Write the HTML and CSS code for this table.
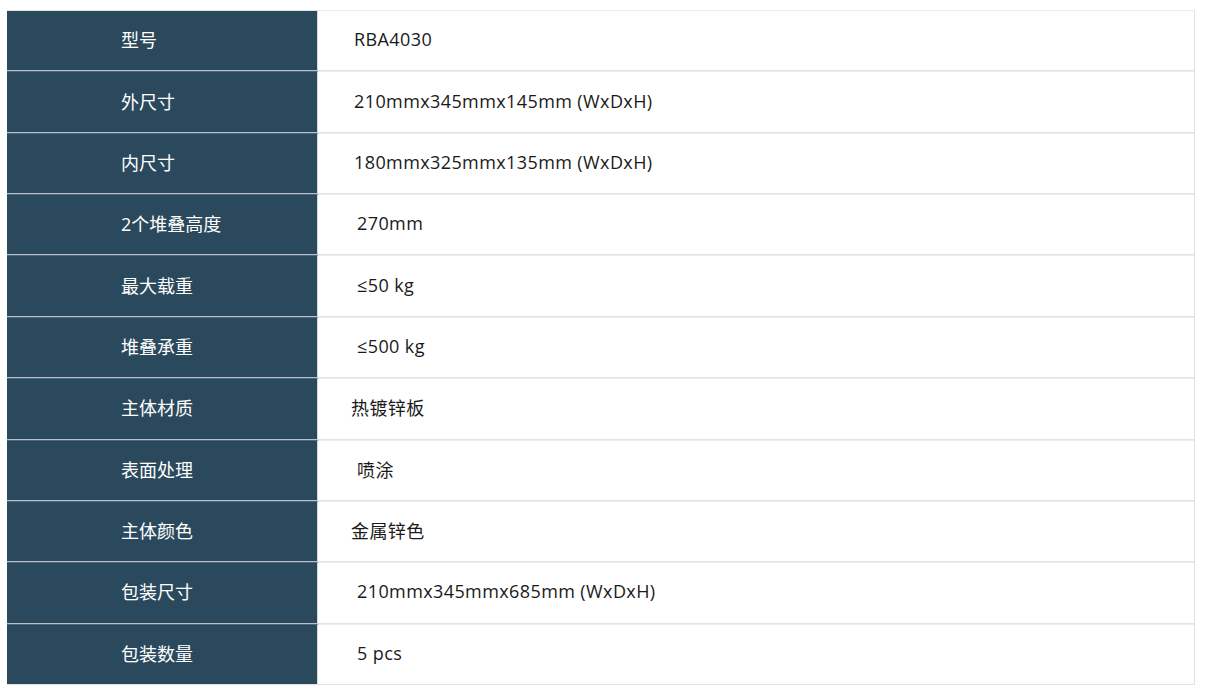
FILE: index.html
```html
<!DOCTYPE html>
<html lang="zh-CN">
<head>
<meta charset="utf-8">
<link rel="stylesheet" href="styles.css">
</head>
<body>
<div class="spec">
  <div class="row"><div class="k">型号</div><div class="v i3">RBA4030</div></div>
  <div class="row"><div class="k">外尺寸</div><div class="v i3">210mmx345mmx145mm (WxDxH)</div></div>
  <div class="row"><div class="k">内尺寸</div><div class="v i3">180mmx325mmx135mm (WxDxH)</div></div>
  <div class="row"><div class="k">2个堆叠高度</div><div class="v i6">270mm</div></div>
  <div class="row"><div class="k">最大载重</div><div class="v i6">≤50 kg</div></div>
  <div class="row"><div class="k">堆叠承重</div><div class="v i6">≤500 kg</div></div>
  <div class="row"><div class="k">主体材质</div><div class="v">热镀锌板</div></div>
  <div class="row"><div class="k">表面处理</div><div class="v i6">喷涂</div></div>
  <div class="row"><div class="k">主体颜色</div><div class="v">金属锌色</div></div>
  <div class="row"><div class="k">包装尺寸</div><div class="v i6">210mmx345mmx685mm (WxDxH)</div></div>
  <div class="row"><div class="k">包装数量</div><div class="v i6">5 pcs</div></div>
</div>
</body>
</html>
```
FILE: styles.css
```css
html, body {
  margin: 0;
  padding: 0;
  background: #fff;
}
body {
  padding: 10px 10px 0 7px;
  font-family: "Open Sans", "Noto Sans CJK SC", sans-serif;
  font-size: 18px;
}
.spec {
  width: 1188px;
  height: 675px;
  display: grid;
  grid-template-rows: repeat(11, 1fr);
  border-right: 1px solid #e2e2e2;
  box-sizing: border-box;
}
.row {
  display: grid;
  grid-template-columns: 311px 1fr;
}
.k {
  background: #2b495d;
  color: #fff;
  display: flex;
  align-items: center;
  padding-left: 114px;
  padding-bottom: 3px;
  border-bottom: 1px solid #b9c1c8;
  border-top: 1px solid #506879;
  border-right: 1px solid #d8d8d8;
}
.row:first-child .k { border-top: 1px solid #e2e2e2; }
.row:last-child .k { border-bottom: 1px solid #e2e2e2; }
.v {
  display: flex;
  align-items: center;
  padding-left: 33px;
  padding-bottom: 3px;
  letter-spacing: 0.4px;
  color: #1a1a1a;
  border-top: 1px solid #ececec;
  border-bottom: 1px solid #e2e2e2;
}
.v.i3 { padding-left: 36px; }
.v.i6 { padding-left: 39px; }
```
